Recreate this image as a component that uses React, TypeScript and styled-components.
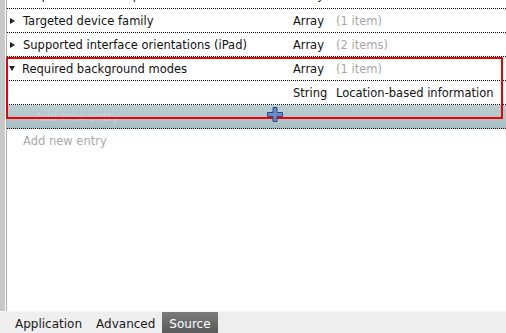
import React from "react";
import styled, { createGlobalStyle } from "styled-components";

const Global = createGlobalStyle`
  html, body { margin: 0; padding: 0; background: #fff; }
  body { font-family: "DejaVu Sans", "Liberation Sans", sans-serif; }
`;

const Page = styled.div`
  width: 506px;
  height: 333px;
  display: flex;
  flex-direction: column;
  position: relative;
  overflow: hidden;
`;

const Main = styled.div`
  flex: 1;
  display: flex;
  min-height: 0;
`;

const Gutter = styled.div`
  width: 5px;
  background: #c8c8c8;
  border-right: 1px solid #fff;
`;

const Editor = styled.div`
  flex: 1;
  border-left: 1px solid #adadad;
  overflow: hidden;
`;

const List = styled.div`
  margin-top: -15px;
`;

/* the first row is scrolled almost out of view: only its descenders peek in */
const Row = styled.div<{ $highlight?: boolean; $scrolled?: boolean }>`
  height: 23px;
  box-sizing: border-box;
  display: grid;
  grid-template-columns: 286px 43px 1fr;
  align-items: ${(p) => (p.$scrolled ? "end" : "center")};
  padding-bottom: ${(p) => (p.$scrolled ? "6px" : "0")};
  height: 24px;
  border-bottom: 1px dotted #111;
  font-size: 11.5px;
  color: #111;
  white-space: nowrap;
  background: ${(p) =>
    p.$highlight ? "linear-gradient(#bccfd3, #a8bfc4)" : "transparent"};
`;

const Key = styled.div<{ $indent?: number }>`
  display: flex;
  align-items: center;
  padding-left: ${(p) => p.$indent ?? 2}px;
`;

const Disclosure = styled.span<{ $open?: boolean }>`
  width: 0;
  height: 0;
  ${(p) =>
    p.$open
      ? `border-left: 3.5px solid transparent;
         border-right: 3.5px solid transparent;
         border-top: 5px solid #222;
         margin-left: 0px;
         margin-right: 7px;`
      : `border-top: 3.5px solid transparent;
         border-bottom: 3.5px solid transparent;
         border-left: 5px solid #222;
         margin-left: 1px;
         margin-right: 8px;`}
`;

const Cell = styled.div<{ $muted?: boolean }>`
  color: ${(p) => (p.$muted ? "#a8a8a8" : "#111")};
  overflow: hidden;
`;

const Placeholder = styled.span<{ $faded?: boolean }>`
  color: ${(p) => (p.$faded ? "#c6d4d8" : "#a9a9a9")};
  font-size: 11.5px;
`;

const Plain = styled.div`
  height: 23px;
  display: flex;
  align-items: center;
  padding-left: 16px;
`;

const DragCursor = styled.svg`
  position: absolute;
  left: 267px;
  top: 107px;
`;

const Highlight = styled.div`
  position: absolute;
  left: 6px;
  top: 57px;
  width: 493px;
  height: 58px;
  border: 2px solid #f20000;
  pointer-events: none;
`;

const TabBar = styled.div`
  height: 21px;
  display: flex;
  align-items: stretch;
  padding-left: 8px;
  background: #eeeeee;
  border-top: 1px solid #f8f8f8;
`;

const Tab = styled.div<{ $active?: boolean }>`
  display: flex;
  align-items: center;
  padding: 2px 7px 0;
  font-size: 12px;
  color: ${(p) => (p.$active ? "#fff" : "#1a1a1a")};
  background: ${(p) =>
    p.$active ? "linear-gradient(#7a7a7a, #5a5a5a)" : "transparent"};
`;

type Entry = {
  key: string;
  type: string;
  value: string;
  muted?: boolean;
  open?: boolean;
  child?: boolean;
  scrolled?: boolean;
};

const entries: Entry[] = [
  { key: "Required device capabilities", type: "Array", value: "(1 item)", muted: true, scrolled: true },
  { key: "Targeted device family", type: "Array", value: "(1 item)", muted: true },
  { key: "Supported interface orientations (iPad)", type: "Array", value: "(2 items)", muted: true },
  { key: "Required background modes", type: "Array", value: "(1 item)", muted: true, open: true },
  { key: "", type: "String", value: "Location-based information", child: true },
];

export default function App() {
  return (
    <>
      <Global />
      <Page>
        <Main>
          <Gutter />
          <Editor>
            <List>
              {entries.map((e, i) => (
                <Row key={i} $scrolled={e.scrolled}>
                  <Key>
                    {!e.child && <Disclosure $open={e.open} />}
                    {e.key}
                  </Key>
                  <Cell>{e.type}</Cell>
                  <Cell $muted={e.muted}>{e.value}</Cell>
                </Row>
              ))}
              <Row $highlight>
                <Key $indent={28}>
                  <Placeholder $faded>Add new entry</Placeholder>
                </Key>
              </Row>
              <Plain>
                <Placeholder>Add new entry</Placeholder>
              </Plain>
            </List>
          </Editor>
        </Main>
        <TabBar>
          <Tab>Application</Tab>
          <Tab>Advanced</Tab>
          <Tab $active>Source</Tab>
        </TabBar>
        <Highlight />
        <DragCursor width="16" height="15" viewBox="0 0 16 15">
          <path
            d="M6 0.5 H10 V5.5 H15.5 V9.5 H10 V14.5 H6 V9.5 H0.5 V5.5 H6 Z"
            fill="#6a8cc4"
            stroke="#2a4a86"
            strokeWidth="1"
          />
        </DragCursor>
      </Page>
    </>
  );
}
